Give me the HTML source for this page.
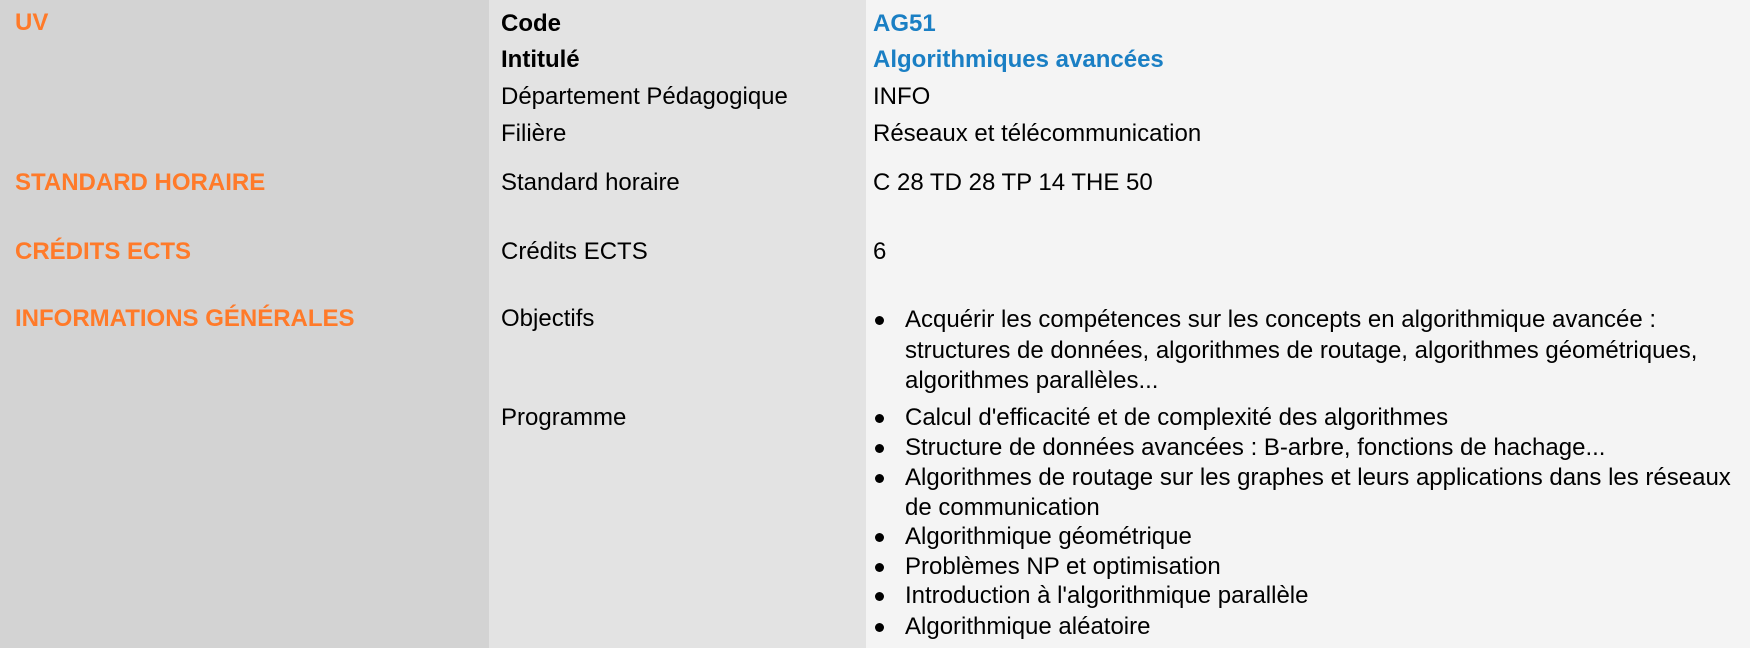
<!DOCTYPE html>
<html><head><meta charset="utf-8"><style>
html,body{margin:0;padding:0;width:1750px;height:648px;overflow:hidden;background:#f4f4f4;font-family:"Liberation Sans",Arial,sans-serif;font-size:24px;color:#000}
.c1{position:absolute;left:0;top:0;width:489px;height:648px;background:#d3d3d3}
.c2{position:absolute;left:489px;top:0;width:377px;height:648px;background:#e3e3e3}
.t{position:absolute;line-height:30px;white-space:nowrap}
.o{color:#ff7a29;font-weight:bold;left:15px}
.l{left:501px}
.v{left:873px}
.b{font-weight:bold}
.bl{color:#1a7fc4;font-weight:bold}
.li{left:905px}
.d{position:absolute;left:875px;width:9px;height:9px;border-radius:50%;background:#000}
</style></head><body>
<div class="c1"></div><div class="c2"></div>
<div class="t o" style="top:8px">UV</div>
<div class="t l b" style="top:9px">Code</div>
<div class="t v bl" style="top:9px">AG51</div>
<div class="t l b" style="top:45px">Intitulé</div>
<div class="t v bl" style="top:45px">Algorithmiques avancées</div>
<div class="t l" style="top:82px">Département Pédagogique</div>
<div class="t v" style="top:82px">INFO</div>
<div class="t l" style="top:119px">Filière</div>
<div class="t v" style="top:119px">Réseaux et télécommunication</div>
<div class="t o" style="top:168px">STANDARD HORAIRE</div>
<div class="t l" style="top:168px">Standard horaire</div>
<div class="t v" style="top:168px">C 28 TD 28 TP 14 THE 50</div>
<div class="t o" style="top:237px">CRÉDITS ECTS</div>
<div class="t l" style="top:237px">Crédits ECTS</div>
<div class="t v" style="top:237px">6</div>
<div class="t o" style="top:304px">INFORMATIONS GÉNÉRALES</div>
<div class="t l" style="top:304px">Objectifs</div>
<div class="d" style="top:316px"></div>
<div class="t li" style="top:305px">Acquérir les compétences sur les concepts en algorithmique avancée :</div>
<div class="t li" style="top:336px">structures de données, algorithmes de routage, algorithmes géométriques,</div>
<div class="t li" style="top:366px">algorithmes parallèles...</div>
<div class="t l" style="top:403px">Programme</div>
<div class="d" style="top:414px"></div>
<div class="t li" style="top:403px">Calcul d'efficacité et de complexité des algorithmes</div>
<div class="d" style="top:444px"></div>
<div class="t li" style="top:433px">Structure de données avancées : B-arbre, fonctions de hachage...</div>
<div class="d" style="top:474px"></div>
<div class="t li" style="top:463px">Algorithmes de routage sur les graphes et leurs applications dans les réseaux</div>
<div class="t li" style="top:493px">de communication</div>
<div class="d" style="top:533px"></div>
<div class="t li" style="top:522px">Algorithmique géométrique</div>
<div class="d" style="top:563px"></div>
<div class="t li" style="top:552px">Problèmes NP et optimisation</div>
<div class="d" style="top:592px"></div>
<div class="t li" style="top:581px">Introduction à l'algorithmique parallèle</div>
<div class="d" style="top:623px"></div>
<div class="t li" style="top:612px">Algorithmique aléatoire</div>
</body></html>
